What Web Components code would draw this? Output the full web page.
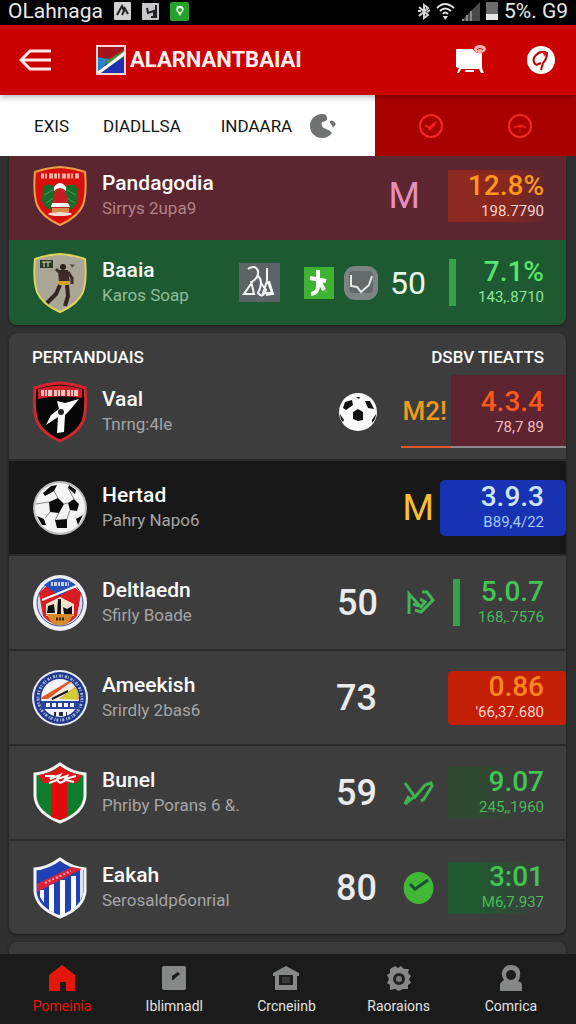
<!DOCTYPE html>
<html lang="id">
<head>
<meta charset="utf-8">
<meta name="viewport" content="width=device-width, initial-scale=1">
<title>Olahraga</title>
<style>
    body {
        margin: 0;
        height: 100vh;
        display: flex;
        flex-direction: column;
        background: #303030;
        color: #f4f4f4;
        font-family: Roboto, "Liberation Sans", sans-serif;
    }

    main {
        flex: 1;
        min-height: 0;
        overflow: hidden;
        padding: 0 10px 0 9px;
        display: flex;
        flex-direction: column;
        gap: 8px;
    }
</style>
</head>
<body>
<status-bar></status-bar>
<app-header>ALARNANTBAIAI</app-header>
<tab-strip></tab-strip>

<main>
    <score-card class="top" joined>
        <team-row tone="maroon" crest="santa" name="Pandagodia" place="Sirrys 2upa9" score="12.8%" detail="198.7790">
            <span slot="mark">M</span>
        </team-row>
        <team-row tone="green" crest="player" name="Baaia" place="Karos Soap" score="7.1%" detail="143,.8710">
            <app-icon slot="points" name="sketch"></app-icon>
            <app-icon slot="points" name="runner"></app-icon>
            <app-icon slot="points" name="pocket"></app-icon>
            <span slot="mark">50</span>
        </team-row>
    </score-card>

    <score-card heading="PERTANDUAIS" aside="DSBV TIEATTS">
        <team-row tone="live" crest="star" name="Vaal" place="Tnrng:4le" score="4.3.4" detail="78,7 89">
            <app-icon slot="points" name="ball"></app-icon>
            <span slot="mark">M2!</span>
        </team-row>
        <team-row tone="blue" crest="football" name="Hertad" place="Pahry Napo6" score="3.9.3" detail="B89,4/22">
            <span slot="mark">M</span>
        </team-row>
        <team-row tone="bar" crest="round-red" name="Deltlaedn" place="Sfirly Boade" score="5.0.7" detail="168,.7576">
            <span slot="points">50</span>
            <app-icon slot="mark" name="zigzag"></app-icon>
        </team-row>
        <team-row tone="red" crest="round-blue" name="Ameekish" place="Srirdly 2bas6" score="0.86" detail="'66,37.680">
            <span slot="points">73</span>
        </team-row>
        <team-row tone="dim" crest="stripe" name="Bunel" place="Phriby Porans 6 &amp;." score="9.07" detail="245,,1960">
            <span slot="points">59</span>
            <app-icon slot="mark" name="trend"></app-icon>
        </team-row>
        <team-row tone="deep" crest="sash" name="Eakah" place="Serosaldp6onrial" score="3:01" detail="M6,7.937">
            <span slot="points">80</span>
            <app-icon slot="mark" name="check"></app-icon>
        </team-row>
    </score-card>

    <score-card></score-card>
</main>

<bottom-nav></bottom-nav>

<script>
const SHIELD = 'M28 2 Q42 3 53 7 Q55 28 51 40 Q46 52 28 60 Q10 52 5 40 Q1 28 3 7 Q14 3 28 2Z';
const SHIELD_POINTED = 'M28 2 Q40 11 53 12 V34 Q52 51 28 60 Q4 51 3 34 V12 Q16 11 28 2Z';

// club crests, all on a 56x62 canvas
const crests = {
    santa: `
        <path d="${SHIELD}" fill="#d90f0d" stroke="#e9a048" stroke-width="2"/>
        <path d="M9 11 L47 11" stroke="#f3b3a4" stroke-width="5" stroke-dasharray="3 1 2 2 4 1"/>
        <path d="M11 22 Q18 16 25 25 L23 45 Q13 45 10 36Z M45 22 Q38 16 31 25 L34 45 Q43 45 46 36Z" fill="#176b2b"/>
        <path d="M12 30 L23 24 M14 38 L23 32 M44 30 L33 24 M43 38 L33 32" stroke="#4e9a4b" stroke-width="1"/>
        <path d="M23 24 Q28 14 33 24 L38 45 H19Z" fill="#c51d20"/>
        <path d="M22 22 Q28 14 34 22 L34 26 Q28 20 22 26Z M20 38 H36 L38 42 H19Z" fill="#fff"/>
        <path d="M20 43 H37 V47 H20Z" fill="#d58a4a"/>
        <ellipse cx="28" cy="49" rx="12" ry="2" fill="#f3ded4"/>`,
    player: `
        <path d="${SHIELD}" fill="#aaa596" stroke="#ddd25e" stroke-width="2"/>
        <path d="M8 8 H21 V16 H8Z" fill="#2b3a24"/>
        <path d="M10 10 H19 M12 10 V15 M16 10 V15" stroke="#e0ddc6" stroke-width="1"/>
        <circle cx="31" cy="15" r="3" fill="#2c211c"/>
        <path d="M26 18 L36 18 L38 31 L27 31Z" fill="#3c2a24"/>
        <path d="M27 20 L24 17 M36 20 L40 26 V32" stroke="#3c2a24" stroke-width="3" fill="none"/>
        <path d="M26 29 H38 V33 H26Z" fill="#d5a023"/>
        <path d="M28 33 L24 42 L15 51 M35 33 L36 44 L33 54" fill="none" stroke="#33251f" stroke-width="4"/>
        <path d="M38 12 L43 13 L40 16Z" fill="#54504a"/>`,
    star: `
        <path d="${SHIELD}" fill="#070707" stroke="#d3262d" stroke-width="3"/>
        <path d="M6 8 Q28 1 50 8 V17 Q28 13 6 18Z" fill="#cf2229"/>
        <path d="M9 12 H47" stroke="#f0c6c4" stroke-width="6" stroke-dasharray="3 1 2 1 4 2"/>
        <path d="M25 20 L33 22 L47 18 L38 29 L33 34 L32 51 L25 52 L26 36 L14 44 L19 34 L27 28Z" fill="#fff"/>
        <circle cx="29" cy="31" r="3" fill="#222"/>`,
    football: `
        <circle cx="28" cy="31" r="27" fill="#bcbcbc"/>
        <circle cx="28" cy="31" r="25" fill="#f4f4f4"/>
        <path d="M17 25 L26 21 L32 27 L27 36 L18 35Z M36 26 L42 22 L47 27 L45 34 L38 33Z M23 43 L35 42 L35 51 L25 51Z M5 39 L12 42 L14 48 L10 48Z M19 9 L25 8 L22 14 L13 19 L11 16Z M37 8 L44 13 L43 17 L36 11Z M44 42 L51 38 L46 48Z" fill="#0b0b0b"/>
        <path d="M22 14 L26 21 M32 27 L36 26 M27 36 L23 43 M18 35 L13 41 M38 33 L35 42 M36 11 L42 22 M4 27 L17 25" fill="none" stroke="#8a8a8a" stroke-width="1"/>`,
    'round-red': `
        <ellipse cx="28" cy="31" rx="27" ry="28" fill="#eef0f6"/>
        <circle cx="28" cy="31" r="23" fill="#d7dbe8" stroke="#3b4a8c" stroke-width="1"/>
        <path d="M7 21 Q28 -2 49 21 L45 44 Q28 62 11 44Z" fill="#d81c22"/>
        <path d="M12 13 Q28 -1 45 14 L27 24Z" fill="#2a4fb6"/>
        <path d="M10 28 L47 13" stroke="#fff" stroke-width="2"/>
        <path d="M19 12 H37" stroke="#c7d2f0" stroke-width="4" stroke-dasharray="2 1 3 1"/>
        <path d="M14 32 L28 25 L42 32 L42 44 H14Z" fill="#efe2cf"/>
        <path d="M16 34 L22 32 L23 41 H15Z M26 27 H29 V42 H25Z M31 35 L35 37 L40 34 V42 H32Z" fill="#111"/>
        <path d="M14 42 H42 L36 51 Q28 56 20 51Z" fill="#d98a2c"/>
        <path d="M24 47 H33" stroke="#3a2410" stroke-width="3" stroke-dasharray="2 1"/>`,
    'round-blue': `
        <circle cx="28" cy="31" r="28" fill="#e8ecf6"/>
        <circle cx="28" cy="31" r="26" fill="#20388c"/>
        <circle cx="28" cy="31" r="22" fill="none" stroke="#a3b0d8" stroke-width="3" stroke-dasharray="2 1 1 2"/>
        <circle cx="28" cy="31" r="19" fill="#f3f5fa"/>
        <path d="M10 30 L37 14 Q46 20 47 32 H9Z" fill="#e0572c"/>
        <path d="M16 32 L39 15 L43 20 L26 33Z" fill="#f3e9e4"/>
        <path d="M28 32 L43 20 Q47 26 46 33Z" fill="#d4cb34"/>
        <path d="M20 32 L36 24" stroke="#1d1d1d" stroke-width="2"/>
        <path d="M9 34 H47 V42 H9Z" fill="#27459e"/>
        <path d="M14 38 H42" stroke="#fff" stroke-width="4" stroke-dasharray="4 2"/>
        <path d="M22 47 H35" stroke="#2a2a44" stroke-width="4" stroke-dasharray="2 3 4 3"/>`,
    stripe: `
        <path d="${SHIELD_POINTED}" fill="#0f7c2b" stroke="#f4f4f4" stroke-width="3"/>
        <path d="M19 20 H35 V55 L28 58 L19 55Z" fill="#e10a0c"/>
        <path d="M28 4 Q38 12 50 13 L45 21 H12 L6 13 Q18 12 28 4Z" fill="#df1417"/>
        <path d="M13 14 L21 14 L18 17 L28 13 L25 17 L35 14 L33 17 L44 14 M17 21 L25 18 L28 21 L34 18 L42 20" fill="none" stroke="#fff" stroke-width="2"/>`,
    sash: `
        <path d="${SHIELD_POINTED}" fill="#1f41b4" stroke="#f4f4f4" stroke-width="3"/>
        <path d="M17 27 H22 V56 L17 53Z M28 23 H33 V58 H28Z M39 19 H44 V49 L39 54Z M8 33 H12 V46 L8 40Z" fill="#fff"/>
        <path d="M48 13 H51 V38 L48 44Z" fill="#dce3f6"/>
        <path d="M5 27 L40 10 L50 12 L5 35Z" fill="#d92338"/>
        <path d="M13 26 L39 14" stroke="#f2aab2" stroke-width="2" stroke-dasharray="2 2"/>`
};

// [width, height, markup] for every glyph in the app
const icons = {
    sketch: [41, 39, `<path fill="#5d6468" d="M0 0H41V39H0Z"/>
        <path d="M9 6 Q16 1 19 8 Q20 14 14 18 L5 31 H15 L12 18 M19 13 Q25 18 19 30 Q24 36 27 27 L22 20 M28 5 V18 L24 30 H33 L29 19 M30 18 L34 31 L27 32" fill="none" stroke="#f4f6f4" stroke-width="2"/>`],
    runner: [30, 32, `<path fill="#3eb331" d="M0 0H30V32H0Z"/><path fill="#72c463" d="M15 16 L24 26 L18 23Z"/>
        <path d="M14 3 V19 Q14 26 7 27 M6 11 L22 14 M16 15 L20 23" fill="none" stroke="#fff" stroke-width="4"/>`],
    pocket: [34, 34, `<rect width="34" height="34" rx="11" fill="#7d8482"/><rect x="5" y="5" width="24" height="22" rx="4" fill="#646a6b"/>
        <path d="M7 9 V20 L13 21 L17 26 L25 19 L28 10" fill="none" stroke="#e5e8e6" stroke-width="2"/>`],
    ball: [38, 38, `<circle cx="19" cy="19" r="19" fill="#fafafa"/>
        <path d="M14 19 L19 16 L24 19 V27 L19 28 L14 26Z M6 9 L13 7 L14 12 L7 17 L4 15Z M26 8 L31 8 L35 16 L29 15Z M1 21 L5 27 L4 29 Q1 26 1 21Z M37 21 L33 27 L33 30 Q37 26 37 21Z M17 4 L21 4 L20 6Z" fill="#101010"/>`],
    zigzag: [28, 26, `<path d="M2 24 V4 L14 17 L18 12 L13 9 M15 2 L20 2 L26 10 L14 22 L8 20 M6 14 L12 16" fill="none" stroke="#3fb653" stroke-width="3"/>`],
    trend: [31, 26, `<path d="M2 3 L12 17 L22 5 L28 3 L29 6 L21 19 L18 21 M12 16 L2 24 L6 16" fill="none" stroke="#3fb34e" stroke-width="3"/>`],
    check: [31, 32, `<ellipse cx="15.5" cy="16" rx="15" ry="16" fill="#43b636"/><path d="M7 12 L12 17 L15 15 L25 8" fill="none" stroke="#14532d" stroke-width="3"/>`],
    back: [34, 24, `<path d="M32 3 H11 L2 12 L11 21 H32 M3 12 H32" fill="none" stroke="#ffe9e6" stroke-width="3"/>`],
    logo: [30, 30, `<path fill="#1f2fae" d="M0 0H30V30H0Z"/><path fill="#a3141c" d="M0 0H30V5L14 15L0 12Z"/><path fill="#2a83c8" d="M0 12 L14 14 L4 26 L0 30Z"/>
        <path fill="#4f8b32" d="M10 16 L30 4 V11 L12 22Z"/><path d="M1 29 L29 8" stroke="#fff" stroke-width="3"/><path fill="none" stroke="#f6d6d2" stroke-width="2" d="M1 1H29V29H1Z"/>`],
    board: [32, 30, `<path fill="#fff" d="M1 5 Q1 4 3 4 H18 Q20 9 27 8 V22 Q27 24 29 28 L26 28 L24 24 H6 L4 28 L2 28 L4 23 Q1 23 1 21Z"/>
        <ellipse cx="25" cy="4" rx="6" ry="4" fill="#f7b5ae"/><path d="M22 5 L25 3 L28 5" fill="none" stroke="#c80000" stroke-width="1"/><path d="M10 26 H19" stroke="#fff" stroke-width="2"/>`],
    racket: [28, 28, `<circle cx="14" cy="14" r="14" fill="#fff"/><path d="M9 19 Q4 14 9 9 Q14 4 20 7 Q20 13 16 17 L14 24 M9 19 L14 17" fill="none" stroke="#b80000" stroke-width="2"/><path fill="#d22" d="M15 6 L20 6 L18 11Z"/>`],
    swirl: [27, 26, `<path fill="#6f7173" d="M12 1 Q17 1 17 5 Q18 8 12 9 Q10 14 16 16 Q20 17 22 20 Q18 25 12 25 A12 12 0 0 1 12 1Z M20 8 Q23 6 26 11 L23 15 Q22 11 20 10Z"/>`],
    tick: [26, 26, `<circle cx="13" cy="13" r="11" fill="none" stroke="#f02a25" stroke-width="2"/><path d="M7 12 L11 15 L18 9 M11 17 L17 11" fill="none" stroke="#ee211d" stroke-width="2"/>`],
    minus: [26, 26, `<circle cx="13" cy="13" r="11" fill="none" stroke="#f02a25" stroke-width="2"/><path d="M7 14 L14 12 L19 14Z M13 17 V20" fill="#ee211d" stroke="#ee211d" stroke-width="1"/>`],
    app1: [17, 18, `<rect width="17" height="18" rx="1" fill="#cfd1d2"/><path d="M3 13 L8 4 L10 9 L8 13 M10 5 L14 12" fill="none" stroke="#222" stroke-width="2"/>`],
    app2: [17, 17, `<rect width="17" height="17" rx="1" fill="#c4c6c8"/><path d="M5 5 L6 10 L12 8 V14 M14 2 V14 H9" fill="none" stroke="#222" stroke-width="2"/>`],
    app3: [19, 19, `<rect width="19" height="19" rx="2" fill="#28a12c"/><path d="M7 4 H12 L14 7 L10 14 L6 8Z" fill="#def2dc"/><circle cx="10" cy="8" r="2" fill="#2fa233"/>`],
    bluetooth: [13, 17, `<path d="M2 4 L11 12 L7 15 V2 L11 5 L2 13 M1 8 H4 M10 9 L13 7" fill="none" stroke="#d7d7d7" stroke-width="2"/>`],
    wifi: [19, 18, `<path d="M1 6 Q9 -2 18 6 M4 9 Q9 4 15 9 M7 12 Q9 9 12 12" fill="none" stroke="#e2e2e2" stroke-width="2"/><path d="M7 14 H12 L9 18Z" fill="#e2e2e2"/>`],
    signal: [19, 19, `<path d="M0 19 L19 0 V19Z" fill="#4a4a4a"/><path d="M2 19 V17 M6 19 V13 M10 19 V9" stroke="#8b8b8b" stroke-width="2"/>`],
    battery: [12, 18, `<path fill="#6c6c6c" d="M0 0H12V18H0Z"/><path fill="#e6e6e6" d="M0 12H12V18H0Z"/>`],
    home: [28, 28, `<path fill="currentColor" d="M14 1 L27 11 V27 H18 V18 H12 V27 H1 V11Z"/>`],
    edit: [24, 26, `<rect y="1" width="24" height="24" rx="2" fill="currentColor"/><path d="M10 15 V11 L16 7 L18 9 L11 15Z" fill="#1a1a1a"/>`],
    stadium: [28, 28, `<path fill="currentColor" d="M14 2 L27 9 V12 H25 V26 H3 V12 H1 V9Z"/><path d="M7 11 H21 V21 H7Z" fill="#1d1d1d"/><path d="M10 13 H18 V19 H10Z" fill="#3a3a3a"/>`],
    gear: [26, 26, `<path fill="currentColor" d="M9 1 L12 3 L15 1 L18 4 L23 4 L22 8 L25 11 L23 14 L25 18 L22 20 V24 L17 24 L13 26 L9 24 L4 25 L4 20 L1 18 L3 14 L1 10 L4 8 L4 4Z"/>
        <circle cx="13" cy="14" r="6" fill="#222"/><circle cx="13" cy="14" r="3" fill="#777"/>`],
    person: [24, 28, `<path fill="currentColor" d="M12 1 C19 1 22 6 21 11 Q21 15 19 17 Q23 18 23 21 V27 H1 V20 Q3 17 5 16 Q2 12 3 8 Q5 1 12 1Z"/><circle cx="12" cy="11" r="5" fill="#1c1c1c"/>`]
};

class AppIcon extends HTMLElement {
    connectedCallback() {
        const [width, height, shapes] = icons[this.getAttribute('name')];
        this.attachShadow({ mode: 'open' }).innerHTML = `
            <style>
                :host { display: inline-flex; flex: none; }
                svg { display: block; }
            </style>
            <svg width="${width}" height="${height}" viewBox="0 0 ${width} ${height}" aria-hidden="true">${shapes}</svg>
        `;
    }
}

class ClubCrest extends HTMLElement {
    connectedCallback() {
        this.attachShadow({ mode: 'open' }).innerHTML = `
            <style>
                :host { display: block; flex: none; }
                svg { display: block; }
            </style>
            <svg width="56" height="62" viewBox="0 0 56 62" aria-hidden="true">${crests[this.getAttribute('name')]}</svg>
        `;
    }
}

class StatusBar extends HTMLElement {
    connectedCallback() {
        this.attachShadow({ mode: 'open' }).innerHTML = `
            <style>
                :host {
                    display: flex;
                    align-items: center;
                    justify-content: space-between;
                    height: 25px;
                    padding: 0 8px;
                    box-sizing: border-box;
                    background: #000;
                    color: #e8e8e8;
                    font-size: 21px;
                    line-height: 22px;
                }
                .group { display: flex; align-items: center; height: 22px; align-self: flex-start; }
                .apps { gap: 11px; }
                .system { gap: 6px; }
            </style>
            <div class="group apps">
                <span>OLahnaga</span>
                <app-icon name="app1"></app-icon>
                <app-icon name="app2"></app-icon>
                <app-icon name="app3"></app-icon>
            </div>
            <div class="group system">
                <app-icon name="bluetooth"></app-icon>
                <app-icon name="wifi"></app-icon>
                <app-icon name="signal"></app-icon>
                <app-icon name="battery"></app-icon>
                <span>5%. G9</span>
            </div>
        `;
    }
}

class AppHeader extends HTMLElement {
    connectedCallback() {
        this.attachShadow({ mode: 'open' }).innerHTML = `
            <style>
                :host {
                    display: flex;
                    align-items: center;
                    height: 70px;
                    padding: 0 21px 0 19px;
                    box-sizing: border-box;
                    background: #cb0000;
                    color: #fff1ef;
                    box-shadow: 0 2px 6px rgba(0, 0, 0, 0.3);
                    z-index: 2;
                }
                button { border: 0; padding: 0; background: none; cursor: pointer; display: flex; }
                .logo { margin: 0 4px 0 43px; }
                h1 { flex: 1; margin: 0; font-size: 22px; line-height: 32px; font-weight: 700; }
                .actions { display: flex; align-items: center; gap: 40px; }
            </style>
            <button aria-label="Kembali"><app-icon name="back"></app-icon></button>
            <app-icon class="logo" name="logo"></app-icon>
            <h1><slot></slot></h1>
            <div class="actions">
                <button aria-label="Papan"><app-icon name="board"></app-icon></button>
                <button aria-label="Olahraga"><app-icon name="racket"></app-icon></button>
            </div>
        `;
    }
}

class TabStrip extends HTMLElement {
    connectedCallback() {
        this.attachShadow({ mode: 'open' }).innerHTML = `
            <style>
                :host { display: flex; height: 61px; background: #a90000; }
                button {
                    border: 0;
                    padding: 0;
                    background: none;
                    color: inherit;
                    font: inherit;
                    cursor: pointer;
                    display: flex;
                    align-items: center;
                }
                .tabs {
                    display: flex;
                    align-items: center;
                    gap: 34px;
                    padding: 0 38px 0 34px;
                    background: #fff;
                    color: #161616;
                    font-size: 17px;
                    line-height: 24px;
                }
                .more { gap: 18px; padding-left: 6px; }
                .filters { flex: 1; display: flex; align-items: center; justify-content: center; gap: 63px; }
            </style>
            <div class="tabs">
                <button>EXIS</button>
                <button>DIADLLSA</button>
                <button class="more">INDAARA <app-icon name="swirl"></app-icon></button>
            </div>
            <div class="filters">
                <button aria-label="Selesai"><app-icon name="tick"></app-icon></button>
                <button aria-label="Kurangi"><app-icon name="minus"></app-icon></button>
            </div>
        `;
    }
}

class ScoreCard extends HTMLElement {
    connectedCallback() {
        const heading = this.getAttribute('heading');
        const header = heading
            ? `<header><h2>${heading}</h2><h2>${this.getAttribute('aside')}</h2></header>`
            : '';

        this.attachShadow({ mode: 'open' }).innerHTML = `
            <style>
                :host {
                    display: flex;
                    flex: none;
                    flex-direction: column;
                    gap: 2px;
                    min-height: 40px;
                    border-radius: 8px;
                    overflow: hidden;
                    background: #2a2a2a;
                    box-shadow: 0 1px 3px rgba(0, 0, 0, 0.5);
                }
                :host(:last-child) { background: #3a3a3b; }
                :host([joined]) { gap: 0; border-radius: 0 0 8px 8px; }
                header {
                    display: flex;
                    justify-content: space-between;
                    align-items: center;
                    height: 42px;
                    margin-bottom: -2px;
                    padding: 6px 22px 0 23px;
                    box-sizing: border-box;
                    background: #3d3d3e;
                }
                h2 { margin: 0; font-size: 17px; line-height: 24px; font-weight: 500; color: #fff; }
            </style>
            ${header}
            <slot></slot>
        `;
    }
}

class TeamRow extends HTMLElement {
    connectedCallback() {
        const get = name => this.getAttribute(name);

        this.attachShadow({ mode: 'open' }).innerHTML = `
            <style>
                :host {
                    --row: #3d3d3e;
                    --place: #a5a5a6;
                    --score: #43c553;
                    --detail: #48bb58;
                    --box: transparent;
                    display: flex;
                    align-items: center;
                    min-height: 93px;
                    padding-left: 23px;
                    box-sizing: border-box;
                    background: var(--row);
                }
                .team { flex: 1; min-width: 0; padding-left: 14px; }
                .name { font-size: 21px; line-height: 25px; font-weight: 500; color: #fafafa; }
                .place { font-size: 17px; line-height: 25px; color: var(--place); white-space: nowrap; }
                .points {
                    display: flex;
                    align-items: center;
                    gap: 10px;
                    font-size: 36px;
                    line-height: 42px;
                    font-weight: 500;
                    color: #ebebed;
                }
                .mark {
                    display: flex;
                    align-items: center;
                    justify-content: flex-end;
                    width: 71px;
                    padding-right: 14px;
                    box-sizing: border-box;
                    font-size: 36px;
                    line-height: 42px;
                }
                .result {
                    display: flex;
                    flex-direction: column;
                    justify-content: center;
                    align-items: flex-end;
                    width: 118px;
                    height: 52px;
                    padding: 0 22px 4px 0;
                    box-sizing: border-box;
                    background: var(--box);
                    white-space: nowrap;
                }
                .score { flex: none; font-size: 28px; line-height: 33px; font-weight: 500; color: var(--score); }
                .detail { flex: none; font-size: 15px; line-height: 18px; color: var(--detail); }

                :host([tone="maroon"]) {
                    --row: #5b2630;
                    --place: #b18288;
                    --score: #ff981d;
                    --detail: #f6d3cf;
                    --box: linear-gradient(90deg, #8f2920 0, #87281f 60px, #5b2630 100px);
                    min-height: 84px;
                    padding-bottom: 4px;
                }
                :host([tone="green"]) {
                    --row: #1d5a31;
                    --place: #8fbd98;
                    --score: #58e56d;
                    --detail: #8ce59a;
                    min-height: 85px;
                }
                :host([tone="maroon"]) .mark { color: #e78fb9; padding-right: 28px; }
                :host([tone="green"]) .mark { color: #e9f7ea; padding-right: 23px; font-size: 32px; }
                :host([tone="green"]) ::slotted([name="sketch"]) { margin-right: 14px; }

                :host([tone="live"]) {
                    --score: #ff5a1c;
                    --detail: #eebcc4;
                    --box: #5d232e;
                    min-height: 84px;
                    padding-bottom: 11px;
                }
                :host([tone="live"]) .mark {
                    align-self: stretch;
                    width: 50px;
                    margin-left: 24px;
                    padding-right: 4px;
                    border-bottom: 2px solid #e4572b;
                    color: #f09a1a;
                    font-size: 26px;
                    font-weight: 500;
                }
                :host([tone="live"]) .result {
                    align-self: stretch;
                    width: 115px;
                    height: auto;
                    padding-bottom: 0;
                    border-bottom: 2px solid #8d8d90;
                }

                :host([tone="blue"]) {
                    --row: #181818;
                    --score: #cbe6ff;
                    --detail: #a9c8f7;
                    --box: #1733b4;
                }
                :host([tone="blue"]) .mark { color: #fbc02d; }
                :host([tone="blue"]) .result {
                    width: 126px;
                    height: 56px;
                    margin-left: -8px;
                    border-radius: 5px;
                }

                /* thin green bar in front of the numbers */
                :host([tone="bar"]) .result,
                :host([tone="green"]) .result {
                    width: 117px;
                    height: 47px;
                    border-left: 7px solid #36a24a;
                }
                :host([tone="bar"]) .result { width: 113px; margin-left: 4px; }

                :host([tone="red"]) {
                    --score: #ff861b;
                    --detail: #ffd5c8;
                    --box: #c31e06;
                }
                :host([tone="red"]) .result { height: 54px; border-radius: 4px; }
                :host([tone="dim"]) { --box: linear-gradient(90deg, #2e4b31 0, #2e4b31 28px, #3d3d3e 70px); }
                :host([tone="deep"]) { --box: linear-gradient(90deg, #205a2f 0, #205a2f 28px, #3d3d3e 90px); }
            </style>
            <club-crest name="${get('crest')}"></club-crest>
            <div class="team">
                <div class="name">${get('name')}</div>
                <div class="place">${get('place').replace('&', '&amp;')}</div>
            </div>
            <div class="points"><slot name="points"></slot></div>
            <div class="mark"><slot name="mark"></slot></div>
            <div class="result">
                <div class="score">${get('score')}</div>
                <div class="detail">${get('detail')}</div>
            </div>
        `;
    }
}

class BottomNav extends HTMLElement {
    connectedCallback() {
        const items = [
            ['home', 'Pomeinia'],
            ['edit', 'Iblimnadl'],
            ['stadium', 'Crcneiinb'],
            ['gear', 'Raoraions'],
            ['person', 'Comrica']
        ];

        this.attachShadow({ mode: 'open' }).innerHTML = `
            <style>
                :host { display: block; background: #1b1b1b; z-index: 1; }
                nav {
                    display: grid;
                    grid-template-columns: repeat(5, 1fr);
                    height: 70px;
                    padding: 0 9px 0 6px;
                }
                a {
                    display: flex;
                    flex-direction: column;
                    align-items: center;
                    padding-top: 10px;
                    gap: 4px;
                    color: #868787;
                    text-decoration: none;
                }
                app-icon { height: 28px; align-items: center; }
                span { font-size: 14px; line-height: 20px; color: #e2e2e2; }
                a.active, a.active span { color: #e4170a; }
            </style>
            <nav>
                ${items.map(([icon, label], i) => `
                    <a href="#${icon}" class="${i === 0 ? 'active' : ''}">
                        <app-icon name="${icon}"></app-icon>
                        <span>${label}</span>
                    </a>
                `).join('')}
            </nav>
        `;
    }
}

customElements.define('app-icon', AppIcon);
customElements.define('club-crest', ClubCrest);
customElements.define('status-bar', StatusBar);
customElements.define('app-header', AppHeader);
customElements.define('tab-strip', TabStrip);
customElements.define('score-card', ScoreCard);
customElements.define('team-row', TeamRow);
customElements.define('bottom-nav', BottomNav);
</script>
</body>
</html>
